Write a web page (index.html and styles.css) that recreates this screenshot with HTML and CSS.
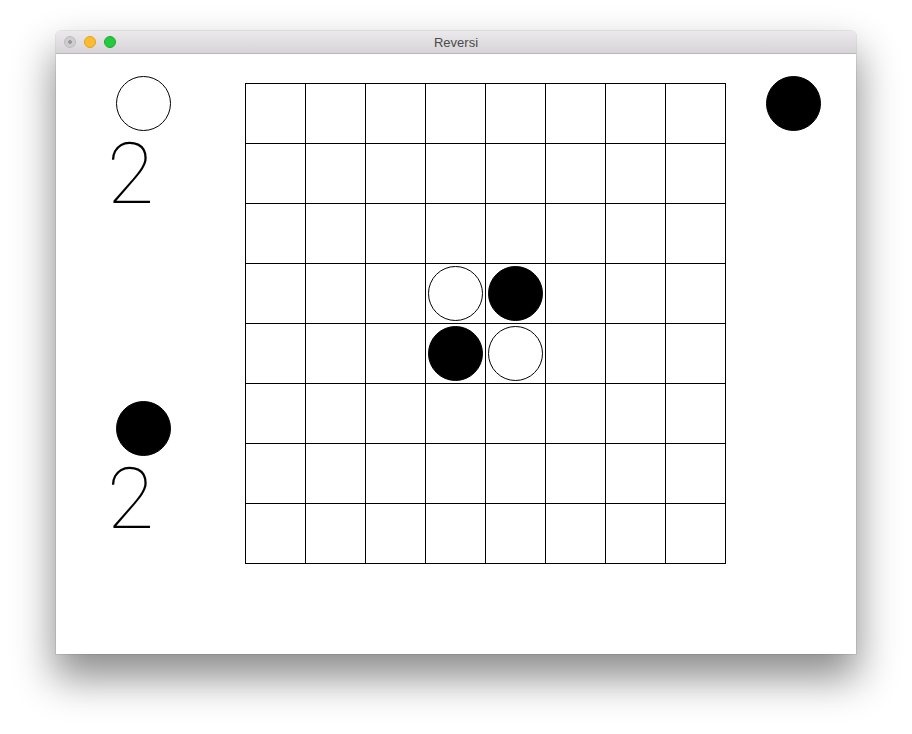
FILE: index.html
```html
<!DOCTYPE html>
<html>
<head>
<meta charset="utf-8">
<title>Reversi</title>
<link rel="stylesheet" href="styles.css">
</head>
<body>
<div class="stage">
  <div class="window">
    <div class="titlebar">
      <div class="lights">
        <span class="light close"></span>
        <span class="light min"></span>
        <span class="light max"></span>
      </div>
      <div class="title">Reversi</div>
    </div>
    <div class="content">
      <div class="side">
        <div class="score score-white">
          <div class="disc white"></div>
          <div class="count">2</div>
        </div>
        <div class="score score-black">
          <div class="disc black"></div>
          <div class="count">2</div>
        </div>
      </div>
      <div class="board">
        <div class="cell"></div><div class="cell"></div><div class="cell"></div><div class="cell"></div><div class="cell"></div><div class="cell"></div><div class="cell"></div><div class="cell"></div>
        <div class="cell"></div><div class="cell"></div><div class="cell"></div><div class="cell"></div><div class="cell"></div><div class="cell"></div><div class="cell"></div><div class="cell"></div>
        <div class="cell"></div><div class="cell"></div><div class="cell"></div><div class="cell"></div><div class="cell"></div><div class="cell"></div><div class="cell"></div><div class="cell"></div>
        <div class="cell"></div><div class="cell"></div><div class="cell"></div><div class="cell"><div class="disc white"></div></div><div class="cell"><div class="disc black"></div></div><div class="cell"></div><div class="cell"></div><div class="cell"></div>
        <div class="cell"></div><div class="cell"></div><div class="cell"></div><div class="cell"><div class="disc black"></div></div><div class="cell"><div class="disc white"></div></div><div class="cell"></div><div class="cell"></div><div class="cell"></div>
        <div class="cell"></div><div class="cell"></div><div class="cell"></div><div class="cell"></div><div class="cell"></div><div class="cell"></div><div class="cell"></div><div class="cell"></div>
        <div class="cell"></div><div class="cell"></div><div class="cell"></div><div class="cell"></div><div class="cell"></div><div class="cell"></div><div class="cell"></div><div class="cell"></div>
        <div class="cell"></div><div class="cell"></div><div class="cell"></div><div class="cell"></div><div class="cell"></div><div class="cell"></div><div class="cell"></div><div class="cell"></div>
      </div>
      <div class="turn">
        <div class="disc black"></div>
      </div>
    </div>
  </div>
</div>
</body>
</html>
```

FILE: styles.css
```css
* { box-sizing: border-box; }

html, body {
  margin: 0;
  padding: 0;
  background: #ffffff;
}

body {
  width: 912px;
  height: 734px;
  overflow: hidden;
  font-family: "Liberation Sans", Arial, sans-serif;
}

.stage {
  padding: 31px 0 0 56px;
}

.window {
  width: 800px;
  height: 623px;
  border-radius: 5px 5px 0 0;
  background: #ffffff;
  box-shadow: 0 22px 40px 2px rgba(0, 0, 0, 0.45), 0 0 0 1px rgba(0, 0, 0, 0.08);
  overflow: hidden;
}

.titlebar {
  position: relative;
  height: 23px;
  background: linear-gradient(#ebe9eb, #d6d4d6);
  border-bottom: 1px solid #b8b6b8;
  display: flex;
  align-items: center;
  justify-content: center;
}

.lights {
  position: absolute;
  left: 8px;
  top: 5px;
  display: flex;
  gap: 8px;
}

.light {
  width: 12px;
  height: 12px;
  border-radius: 50%;
  display: block;
}

.light.close {
  background: radial-gradient(circle, #9a9a9a 0 1.6px, #cfcdcf 2.2px);
  border: 1px solid #bdbbbd;
}

.light.min {
  background: #fdbc2c;
  border: 1px solid #e0a12a;
}

.light.max {
  background: #27c93f;
  border: 1px solid #1aab2e;
}

.title {
  font-family: "Liberation Sans", Arial, sans-serif;
  font-size: 13px;
  color: #4a4a4a;
  margin-top: 1px;
}

.content {
  display: flex;
  height: 600px;
  padding-top: 22px;
}

.side {
  width: 189px;
  padding-left: 60px;
  display: flex;
  flex-direction: column;
}

.score {
  display: flex;
  flex-direction: column;
}

.score-black {
  margin-top: 184px;
}

.count {
  font-family: Roboto, "Liberation Sans", sans-serif;
  font-weight: 100;
  font-size: 86px;
  line-height: 1;
  color: #000;
  margin-left: -9px;
  margin-top: 0;
}

.disc {
  width: 55px;
  height: 55px;
  border-radius: 50%;
  border: 1px solid #000;
}

.disc.white { background: #ffffff; }
.disc.black { background: #000000; }

.board {
  margin-top: 7px;
  width: 481px;
  height: 481px;
  display: grid;
  grid-template-columns: repeat(8, 60px);
  grid-template-rows: repeat(8, 60px);
  border-left: 1px solid #000;
  border-top: 1px solid #000;
}

.cell {
  border-right: 1px solid #000;
  border-bottom: 1px solid #000;
  display: flex;
  align-items: center;
  justify-content: center;
}

.turn {
  margin-left: 40px;
}
```
